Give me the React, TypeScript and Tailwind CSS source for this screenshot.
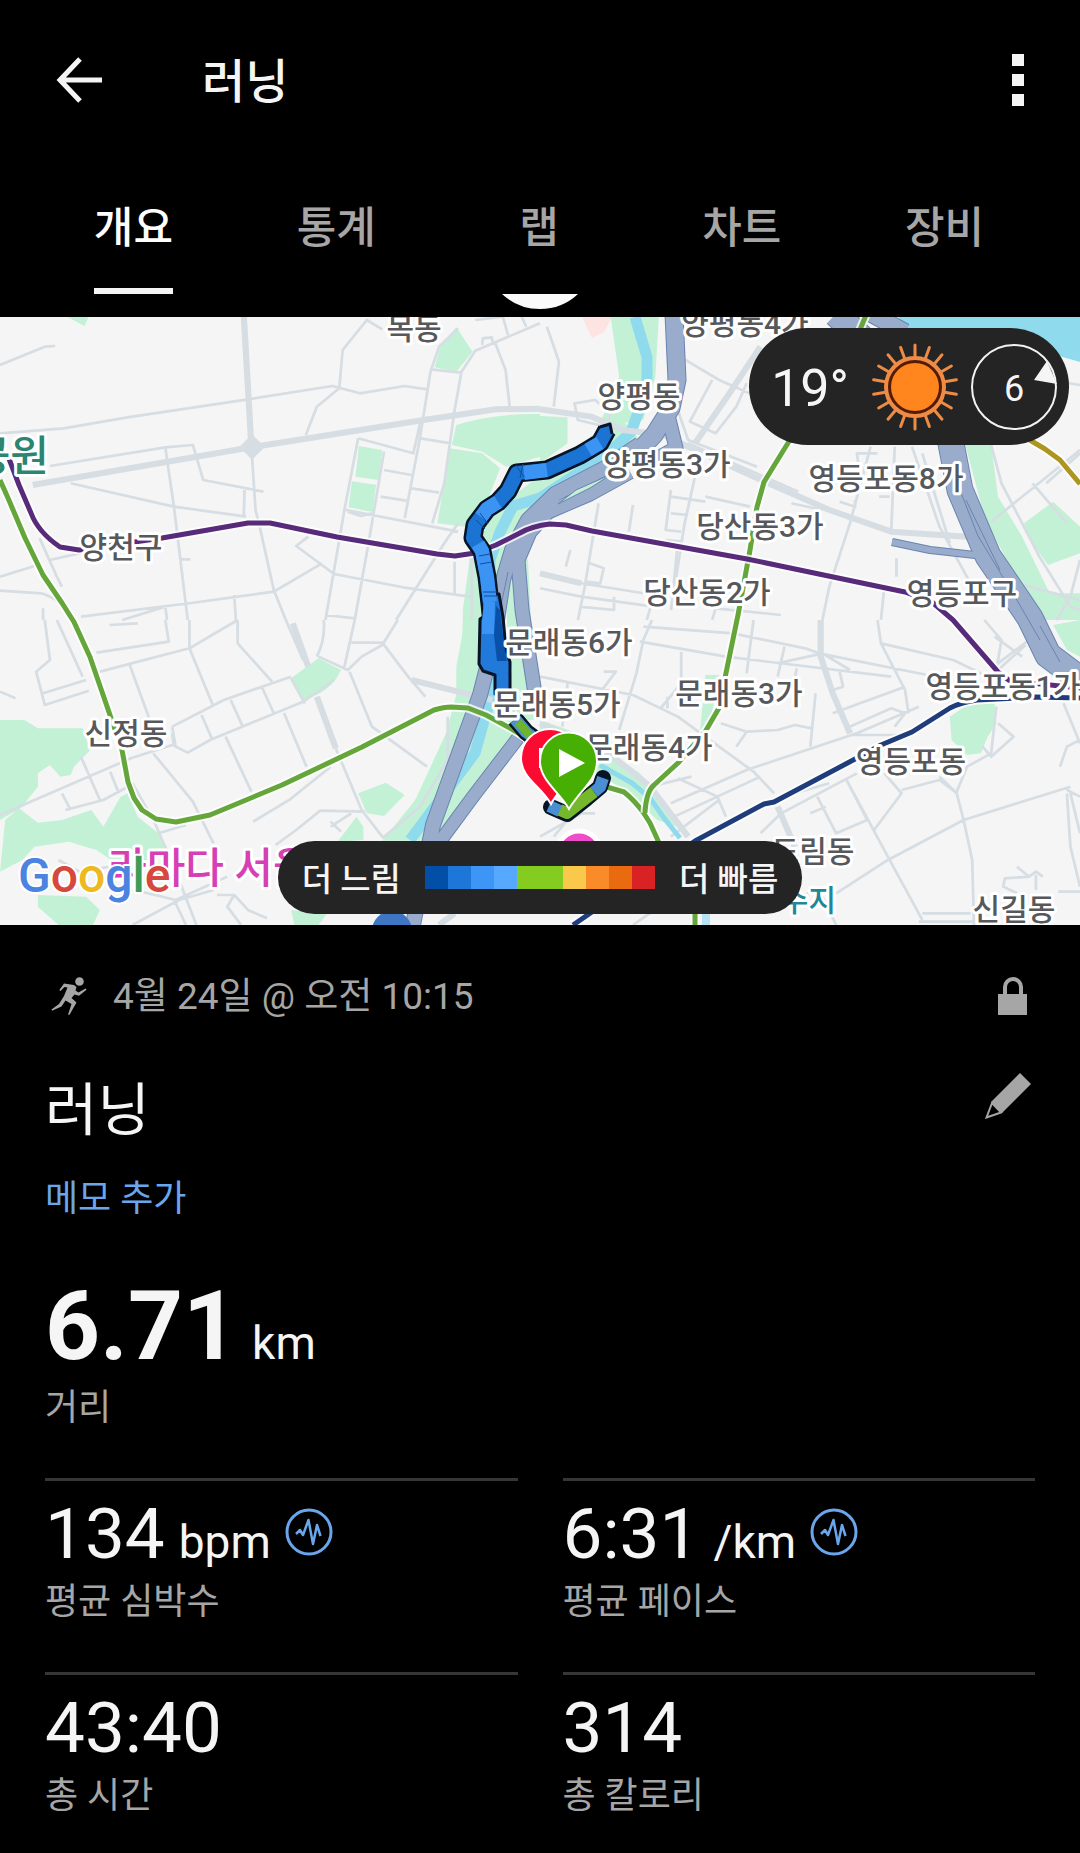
import { useState } from "react"
import clsx from "clsx"

const tabs = ["개요", "통계", "랩", "차트", "장비"]

const paceColors = [
  "bg-[#034fa8]",
  "bg-[#1c77d8]",
  "bg-[#3d96f5]",
  "bg-[#57a9ff]",
  "bg-[#84cc1f]",
  "bg-[#84cc1f]",
  "bg-[#fac94c]",
  "bg-[#f98c28]",
  "bg-[#ea6a10]",
  "bg-[#d82224]",
]

const stats = [
  { value: "134", unit: "bpm", label: "평균 심박수", graph: true },
  { value: "6:31", unit: "/km", label: "평균 페이스", graph: true },
  { value: "43:40", unit: "", label: "총 시간", graph: false },
  { value: "314", unit: "", label: "총 칼로리", graph: false },
]

const places = [
  { name: "목동", x: 414, y: 29 },
  { name: "양천구", x: 121, y: 248 },
  { name: "양평동", x: 639, y: 97 },
  { name: "양평동4가", x: 745, y: 24 },
  { name: "양평동3가", x: 667, y: 165 },
  { name: "영등포동8가", x: 886, y: 179 },
  { name: "당산동3가", x: 760, y: 227 },
  { name: "당산동2가", x: 707, y: 293 },
  { name: "영등포구", x: 962, y: 294 },
  { name: "문래동6가", x: 569, y: 343 },
  { name: "문래동5가", x: 557, y: 405 },
  { name: "문래동3가", x: 739, y: 394 },
  { name: "문래동4가", x: 649, y: 448 },
  { name: "영등포동1가", x: 1003, y: 387 },
  { name: "영등포동", x: 911, y: 462 },
  { name: "신정동", x: 126, y: 434 },
  { name: "도림동", x: 813, y: 552 },
  { name: "신길동", x: 1014, y: 610 },
]

// Each tile covers 540x310 of the map and is drawn on a 1568x930 grid
const tiles = [
  {
    id: "nw",
    transform: "translate(0 0) scale(0.3444 0.3333)",
    parks:
      "M195 20H258L245 48ZM1325 52L1372 125L1325 185L1262 172L1280 105ZM1042 408L1110 420L1100 510L1032 500ZM1022 514L1092 524L1082 606L1012 592ZM1325 345Q1430 310 1568 312V440L1470 470L1400 425L1312 405ZM1306 415L1400 430L1452 475L1420 560L1350 650L1270 640Z",
    highways: "M95 525L730 412L1230 330L1440 298L1568 296M708 20L730 412",
    roads:
      "M0 165L130 110L160 108M0 370L185 355L370 322L720 268L965 228L1045 250L1175 228L1240 238M730 412L742 600L755 655L795 840L830 930M145 468L480 412L560 405L590 510L765 545M480 412L505 590L545 930M205 520L505 590L715 620M710 535L708 615M985 235L995 120L1065 30L1110 58M985 235L920 290L888 375M1568 40L1380 122L1340 185L1320 300L1290 520L1255 640M1330 55L1275 110L1250 185L1220 380L1175 625M1250 178L1340 188M1438 100L1468 180L1480 290M1400 105L1402 85L1428 82L1432 105M1380 30L1460 20L1475 75M1515 20L1528 50M1040 385L1200 430L1222 330M1040 385L1000 600L945 930M1115 425L1070 700L1030 930M1115 480L1195 495M1105 560L1180 572M1195 535L1275 548M1220 385L1310 400M1005 600L1330 665M1010 605L1048 618L1080 610M1330 640L1290 700L1150 930M895 680L860 708L970 792L1170 832L1365 860M935 760L795 845L550 880L235 920M1320 755V850M1370 740V930M525 748H553M115 685L165 800L180 830M0 800L100 768M145 750L240 728M0 842L120 850Q180 870 205 920M125 895V930M480 890L485 930M680 855L685 930M355 930L480 890M945 915L1030 925",
  },
  {
    id: "ne",
    transform: "translate(540 0) scale(0.3444 0.3333)",
    parks:
      "M205 20H345L335 200L300 330L170 350L230 200ZM0 318L80 322V400L0 460ZM1235 405H1310L1330 560L1400 680L1480 850L1568 850V930H1440L1380 800L1290 620ZM1405 640L1490 575L1568 650V730L1475 765L1430 700Z",
    highways:
      "M0 298L150 320L240 360L360 375L430 410L620 500L840 600L1020 665L1240 680M640 110L550 250L450 400M0 790L120 820",
    roads:
      "M20 50L55 155L40 290M415 145L520 210L630 260M500 210L435 335L510 370L570 290L600 220M100 280L160 270L205 310L190 350L110 330ZM390 270L430 390L630 470M430 400L750 545M380 540L365 660L410 665M380 560L480 575M380 610L430 615M480 560L610 590M365 690L415 695M450 500L420 640L380 900M270 585L258 665M88 720L75 770M170 580L130 830L110 930M400 700L385 860M145 760L185 775L175 820L135 815M120 820L300 850M0 835L120 860L330 890M115 890L215 900V860M330 860L310 930M510 895L500 930M510 895L700 915M960 410L900 640L840 830L820 930M1030 410L1020 660M1080 410L1160 650L1250 820M1110 430L1190 700M980 430H920L930 500M870 575L915 590V570M985 560H1015M1035 745V800M1000 830L990 930M1568 420L1310 635M1430 520L1530 640M1470 520L1568 430M1310 405L1340 520L1450 740L1540 890L1568 900M1380 820L1568 870M1500 930L1540 860L1568 750M1480 210L1568 225M820 600L730 580",
  },
  {
    id: "sw",
    transform: "translate(0 310) scale(0.3444 0.3333)",
    parks:
      "M0 300H70L110 325H240L262 390L215 440L205 465L175 470L145 435L110 460V500L60 565L0 600ZM15 600L55 565L110 608L180 600L265 570L300 620L350 530L370 520L400 590L460 640L490 690L380 760L280 690L200 665L100 680L65 720L0 755ZM110 825L250 830L290 870L270 915H170L110 860ZM845 175L925 115L990 150Q960 220 880 238ZM1040 520L1120 488L1175 525L1115 588L1065 580ZM1035 590L1055 620L1055 660L980 665ZM845 870L950 880L925 915H855ZM1390 0H1350L1325 140V250L1310 400L1190 560L1110 662H1250L1400 520L1500 350L1490 160L1400 150Z",
    highways: "M850 10L895 140M920 230L975 385M1195 180L1330 215L1430 240M1275 915L1320 880",
    roads:
      "M130 0L145 120L105 155L130 255L258 212M125 220L250 180M165 0L240 170M290 155L550 85L690 0M550 0V85L620 260M280 98L490 65L480 0M318 15L400 10M375 130L435 300M690 0V70L790 185M830 0L880 120M940 0Q945 60 920 110M925 110L1010 150L1050 110L1110 75L1155 0M1030 0L1000 140M1020 68H1110L1185 170L1235 230M1015 155L1080 320L1240 440M650 240L845 170M500 320L650 240L760 200L795 280M500 320L510 380L545 398L610 360L880 245L970 180M585 285L615 355M670 240L705 320M845 175L885 250M825 280L890 440M655 350L730 515M500 375L380 415L0 585M500 340L505 380M445 400L560 545L620 670M235 410L290 540M320 455L345 520M180 520L205 570M190 570L300 540L390 490M385 490L450 610L520 780L570 915M460 640L540 615M975 385L1050 570L1110 650M1060 575L930 572L860 630L800 675M960 605L990 635M1020 580L960 620M960 440L840 540L735 605M0 215L45 235M1300 290V420L1220 560L1110 655M390 810L510 840L660 770M385 915L520 840L620 810M510 850L540 915M630 825H680L720 870L775 895M680 825L660 860L700 915M170 720L230 755L350 735",
  },
  {
    id: "se",
    transform: "translate(540 310) scale(0.3444 0.3333)",
    parks:
      "M480 165H520L495 300L465 330ZM1190 290L1240 255L1320 250L1325 310L1300 350L1280 400L1240 405L1195 360ZM0 300Q120 340 180 380L290 460L350 540L400 620L340 600L260 520L120 430L0 340ZM1490 15L1568 0V110L1530 90Z",
    highways:
      "M815 0V110L850 220L900 340M0 310L200 400L320 500L430 650M690 560L740 680",
    roads:
      "M300 20L560 40L770 85L810 100L1125 165M290 65L540 110L1020 170M690 130L820 100L900 150M280 160L300 60L325 0M280 160L230 330M0 170L270 225L400 290L620 455L680 520M410 95V190L350 265M370 230V265M690 170L710 80M800 220L785 380M745 145L735 210M980 0L990 70L1060 210L1070 280M990 70L1200 120L1300 170M870 155L880 200L850 210M525 310L600 335L690 330L740 315L790 325M600 335L570 380M380 550L600 450L920 340L1100 260M390 590L640 470M850 280L1060 200M900 320L1020 265L1060 280L1030 320M900 345H1060M400 475L515 530L540 590M320 500L440 470M380 650L520 540M740 520L840 490M640 640L700 580L920 460M805 530L860 640L950 600L890 480M785 580L830 560M890 480L1010 710L1110 900M1000 460L1050 520L970 630M1050 510L1160 480L1210 520M1160 470L1210 520L1230 600L1255 720L1260 915M1210 515L1240 440L1310 400L1325 260M1330 310L1375 350L1310 410L1285 380M1520 250L1568 370M1510 440L1530 380L1568 360M1540 500L1230 600L1010 720L860 820M1530 510L1568 530M1530 520L1540 680L1568 800M1540 520L1568 640M1385 740L1420 770L1440 755L1460 770M1440 765V810M1420 770L1350 775L1345 800L1385 820M1110 880H1250M1100 905H1260M1505 815H1568M820 830L860 915M0 650L120 580L160 580M40 650L80 600M180 210L220 155H185M80 190L65 320M270 915L360 850M650 880L780 820M1320 50L1400 110M1290 0L1340 60L1320 180M1420 60L1330 130M1410 75L1330 150M600 160L620 0",
  },
]

const font = "Roboto, 'Noto Sans CJK KR', sans-serif"

function RouteMap() {
  return (
    <svg
      viewBox="0 7 1080 608"
      className="block w-full bg-[#f5f5f5]"
      role="img"
      aria-label="러닝 경로 지도"
      fill="none"
      fontFamily={font}
    >
      {/* Han river and hospital block */}
      <path d="M898 7H1080V52L1052 44L960 24L910 22Z" fill="#90daee" />
      <path d="M582 7H612L604 22L592 28Z" fill="#fde3e1" />

      {tiles.map((tile) => (
        <path key={tile.id} d={tile.parks} transform={tile.transform} fill="#c3f1d5" />
      ))}

      {/* Stream with its green banks */}
      <path d="M631 120L600 146L540 192L506 216L492 240L484 300L482 370L466 430L420 530" stroke="#c3f1d5" strokeWidth="42" strokeLinejoin="round" />
      <path d="M516 250L520 330L530 410" stroke="#c3f1d5" strokeWidth="24" />
      <path d="M635 7L647 47L647 78L631 122L610 142L540 188L513 196L500 222L490 250L489 393L475 443L410 530" stroke="#90daee" strokeWidth="11" strokeLinejoin="round" />

      {tiles.map((tile) => (
        <g key={tile.id} transform={tile.transform} stroke="#d6dde3" strokeLinejoin="round">
          <path d={tile.roads} strokeWidth="8" />
          <path d={tile.highways} strokeWidth="18" />
        </g>
      ))}
      <path d="M252 127L262 137L252 147L242 137Z" fill="#d6dde3" stroke="#d6dde3" strokeWidth="4" />
      <path d="M600 455L632 473L650 488L664 508L680 528" stroke="#90daee" strokeWidth="5" />
      <path d="M706 603V615" stroke="#b6e2f1" strokeWidth="8" />

      {/* Expressways */}
      {[
        { color: "#6984af", extra: 2 },
        { color: "#9aaccc", extra: 0 },
      ].map((pass) => (
        <g key={pass.color} stroke={pass.color} strokeLinejoin="round">
          <path d="M674 4L677 70L671 98L654 125L628 152" strokeWidth={17 + pass.extra} />
          <path d="M668 105L676 138L640 158" strokeWidth={13 + pass.extra} />
          <path d="M640 134L605 158L555 184L528 210L512 240L503 270L494 330L480 385L433 515L412 620" strokeWidth={14 + pass.extra} />
          <path d="M630 162L590 184L548 202L530 222L518 250L522 300L536 390" strokeWidth={13 + pass.extra} />
          <path d="M518 428L472 488L430 545" strokeWidth={12 + pass.extra} />
          <path d="M836 4L868 34L920 60L948 118L960 180L988 246L1030 308L1048 345L1084 372" strokeWidth={25 + pass.extra} />
          <path d="M892 232L930 240L984 246" strokeWidth={6 + pass.extra} />
          <path d="M868 2L905 22" strokeWidth={16 + pass.extra} />
        </g>
      ))}
      {/* Gap between the carriageways at Yangpyeong */}
      <path d="M558 194L576 180L612 164L590 178Z" fill="#c3f1d5" stroke="#6984af" />
      <path d="M952 160L978 226L1018 292L1040 330M966 190L1000 260M500 300L508 262M1040 316L1060 352" stroke="#6984af" strokeWidth="1" />

      {/* Subway lines */}
      {[
        { id: "green-west", color: "#64a63a", d: "M0 170L8 188L25 228L43 265L62 293L74 312L90 347L110 405L122 440L128 472L134 488L142 500L156 509L176 512L210 505L282 475L362 437L434 400Q444 397 451 397L468 398L486 405L510 418L540 436M600 475L624 482Q634 490 643 502L650 513L660 535M695 600V615" },
        { id: "green-east", color: "#64a63a", d: "M866 5L857 27L788 133L764 172L757 197L750 240L738 305L726 363L719 398L705 422L678 453L654 475Q646 482 645 503" },
        { id: "purple", color: "#572b7a", d: "M8 146L19 175L31 203Q38 222 60 237L79 240L162 228L248 213H270L337 227L437 244L455 246L475 243L496 235L520 223Q532 216 550 214L566 215L592 221L747 249L905 282L932 292L953 310L998 362L1010 371L1080 378" },
        { id: "navy", color: "#1f3d7a", d: "M1080 388L1036 387L977 390Q962 392 950 398L912 422L881 435L857 448L774 492L764 494L695 531L573 615" },
        { id: "olive", color: "#ad951f", d: "M1028 129L1045 139L1060 150L1080 174" },
      ].map((line) => (
        <g key={line.id} strokeLinejoin="round">
          <path d={line.d} stroke="#ffffff" strokeOpacity="0.8" strokeWidth="9" />
          <path d={line.d} stroke={line.color} strokeWidth="5" />
        </g>
      ))}

      {/* Run track, tinted by pace */}
      <g strokeLinejoin="round">
        <path d="M607 120L600 133L580 145L547 160L517 163L508 181L498 192L487 199L475 215L473 228L482 241L487 267L491 303" stroke="#071426" strokeWidth="19" />
        <path d="M499 284L503 307L506 340L510 352V384H495V365L483 361L479 354L480 309L483 307L484 286Z" fill="#2179d9" stroke="#071426" strokeWidth="3" />
        <path d="M607 120L600 133L580 145L547 160L517 163L508 181L498 192L487 199L475 215L473 228L482 241L487 267L491 303" stroke="#1b74d4" strokeWidth="14" />
        <path d="M600 133L588 140M547 160L524 163M498 192L487 199L481 207M478 234L482 241L487 267L490 292" stroke="#3b93f3" strokeWidth="14" />
        <path d="M484 292H495L494 324H482V310Z" fill="#3b93f3" />
        <path d="M496 296L500 300L505 342L507 351H497L494 325Z" fill="#0951a8" />
        <path d="M516 155L524 167M523 154L520 168M480 203L488 214M476 210L485 219M479 246L490 244M480 254L492 252M483 282H497M484 286H497" stroke="#0d4f9f" strokeWidth="1" />
        {/* Pointed end of the track */}
        <path d="M600 117L610 114L612 124" fill="#1b74d4" stroke="#071426" strokeWidth="3" />
        <path d="M515 409L526 422L542 434" stroke="#071426" strokeWidth="17" />
        <path d="M603 468L600 477L587 488L567 504L551 497" stroke="#071426" strokeWidth="16" strokeLinecap="round" />
        <path d="M515 409L526 422L542 434" stroke="#4e92cc" strokeWidth="12" />
        <path d="M518 412L530 426" stroke="#6fb52a" strokeWidth="8" />
        <path d="M603 468L600 477L594 482M560 501L549 496" stroke="#4b8fd3" strokeWidth="12" />
        <path d="M594 482L567 503L560 500" stroke="#76b82d" strokeWidth="12" />
      </g>

      {/* Points of interest under the legend */}
      <circle cx="579" cy="543" r="22" fill="#ee4cc8" stroke="#ffffff" strokeWidth="5" />
      <circle cx="392" cy="621" r="20" fill="#3f76c4" />

      {places.map((place) => (
        <text
          key={place.name}
          x={place.x}
          y={place.y}
          textAnchor="middle"
          fontSize="30"
          fontWeight="500"
          fill="#56585c"
          stroke="#ffffff"
          strokeWidth="6"
          strokeLinejoin="round"
          paintOrder="stroke"
        >
          {place.name}
        </text>
      ))}
      <g stroke="#ffffff" strokeWidth="6" strokeLinejoin="round" paintOrder="stroke" fontWeight="500">
        <text x="49" y="161" textAnchor="end" fontSize="42" fill="#2b8570">공원</text>
        <text x="108" y="573" fontSize="42" fill="#d63fb5">라마다 서울</text>
        <text x="836" y="601" textAnchor="end" fontSize="30" fill="#1f8797">수지</text>
        <text x="18" y="582" fontSize="48" strokeWidth="4">
          <tspan fill="#4a83e0">G</tspan>
          <tspan fill="#d6483d">o</tspan>
          <tspan fill="#ecb91f">o</tspan>
          <tspan fill="#4a83e0">g</tspan>
          <tspan fill="#3c9c58">l</tspan>
          <tspan fill="#d6483d">e</tspan>
        </text>
      </g>

      {/* Finish and start pins */}
      <path d="M551 494C541 476 521 468 521 448A29 29 0 0 1 579 448C579 468 560 476 551 494Z" fill="#fb0a32" stroke="#ffffff" strokeWidth="2" />
      <rect x="539" y="438" width="20" height="20" fill="#ffffff" />
      <path d="M569 499C559 481 540 471 540 451A28 28 0 0 1 597 451C597 471 579 481 569 499Z" fill="#47ae04" stroke="#ffffff" strokeWidth="2" />
      <path d="M559 439L585 453L559 467Z" fill="#ffffff" />
    </svg>
  )
}

function SunIcon() {
  const rays = Array.from({ length: 18 }, (_, i) => i * 20)
  return (
    <svg viewBox="-44 -44 88 88" className="size-[88px]" aria-hidden="true">
      {rays.map((angle) => (
        <line key={angle} y1="-30" y2="-42" stroke="#ee8b44" strokeWidth="3" strokeLinecap="round" transform={`rotate(${angle})`} />
      ))}
      <circle r="29" fill="#551c05" stroke="#ee8b44" strokeWidth="4" />
      <circle r="24" fill="#ff861f" />
    </svg>
  )
}

function WindIcon() {
  return (
    <svg viewBox="-44 -44 88 88" className="size-[88px]" aria-label="풍속 6" fontFamily={font}>
      <circle r="42" fill="none" stroke="#f3f3f3" strokeWidth="2" />
      <path d="M20 -7L33 -26L43 -3Z" fill="#f5f5f5" />
      <text y="14" textAnchor="middle" fontSize="36" fill="#f5f5f5">6</text>
    </svg>
  )
}

function RunnerIcon() {
  return (
    <svg viewBox="0 0 36 40" className="h-10 w-9" fill="#a6a6a6" aria-hidden="true">
      <circle cx="28.500" cy="5.500" r="4.300" />
      <path d="M13 7.500L23 9L25.500 11L24.500 14.500L27.500 16.500L34.500 12.500L35.500 13.700L28 19.700L23.500 18.500L20.500 22L25.500 26.500L18.500 38.800H17L20.500 28L14.500 24.500L10.500 30.500L1 34.800L0.500 33.500L8 28L13 20L16.500 11.500L13.500 11L9.500 15L8.300 14Z" />
    </svg>
  )
}

function LockIcon() {
  return (
    <svg viewBox="0 0 30 38" className="h-[38px] w-[30px]" aria-label="비공개">
      <path d="M7 18V10A8 8 0 0 1 23 10V18" fill="none" stroke="#a6a6a6" strokeWidth="4" />
      <path d="M0 17H29V38H0Z" fill="#a6a6a6" />
    </svg>
  )
}

function PencilIcon() {
  return (
    <svg viewBox="0 0 46 46" className="size-[46px]" aria-hidden="true">
      <path d="M35 0L46 11L17 40L6 29Z" fill="#a6a6a6" />
      <path d="M7 30L1.500 44.500L16 39.500Z" fill="none" stroke="#a6a6a6" strokeWidth="2" />
    </svg>
  )
}

function GraphIcon() {
  return (
    <svg viewBox="0 0 48 48" className="size-12" fill="none" stroke="#69a6ec" aria-hidden="true">
      <circle cx="24" cy="24" r="22" strokeWidth="3" />
      <path d="M11 26L15 22L18 27L23.500 12L28 36L32 17L35.500 28" strokeWidth="2.500" strokeLinejoin="round" />
    </svg>
  )
}

export default function App() {
  const [activeTab, setActiveTab] = useState("개요")

  return (
    <div className="min-h-screen bg-black pb-6 font-[Roboto,'Noto_Sans_CJK_KR',sans-serif] text-[#f5f5f5]">
      {/* Top bar */}
      <header className="flex h-40 items-center justify-between pr-10 pl-14">
        <div className="flex items-center gap-[98px]">
          <button type="button" aria-label="뒤로">
            <svg viewBox="0 0 48 48" className="size-12" fill="none" stroke="#f5f5f5" strokeWidth="5">
              <path d="M46 24H5M24 3L4 24L24 45" />
            </svg>
          </button>
          <h1 className="pt-1 text-[47px] leading-[60px] font-medium">러닝</h1>
        </div>
        <button type="button" aria-label="더보기" className="flex w-11 flex-col items-center gap-2">
          <span className="size-3 bg-[#f5f5f5]" />
          <span className="size-3 bg-[#f5f5f5]" />
          <span className="size-3 bg-[#f5f5f5]" />
        </button>
      </header>

      {/* Tabs */}
      <nav className="grid grid-cols-5 pr-[34px] pl-8" role="tablist">
        {tabs.map((tab) => (
          <button
            key={tab}
            type="button"
            role="tab"
            aria-selected={activeTab === tab}
            onClick={() => setActiveTab(tab)}
            className="flex justify-center text-[43px] font-medium"
          >
            <span
              className={clsx(
                "flex h-[134px] items-center border-b-6 pt-2",
                activeTab === tab ? "border-[#f5f5f5] text-white" : "border-transparent text-[#a6a6a6]"
              )}
            >
              {tab}
            </span>
          </button>
        ))}
      </nav>

      {/* Refresh knob peeking out from under the tabs */}
      <div className="flex h-[23px] justify-center">
        <svg viewBox="0 0 76 16" className="h-4 w-[76px]" aria-hidden="true">
          <path d="M0 0H76Q60 15 38 15Q16 15 0 0Z" fill="#fafafa" />
        </svg>
      </div>

      {/* Map */}
      <section className="relative">
        <RouteMap />
        <div className="absolute top-[11px] right-[11px] flex h-[117px] items-center rounded-full bg-[#242424] pr-[11px] pl-[22px]">
          <span className="pt-1 text-[52px] leading-none">19°</span>
          <span className="ml-[22px]">
            <SunIcon />
          </span>
          <span className="ml-[11px]">
            <WindIcon />
          </span>
        </div>
        <div className="absolute inset-x-0 bottom-[11px] flex justify-center">
          <div className="flex h-[73px] items-center gap-6 rounded-full bg-[#242424] px-6 text-[33px] font-medium whitespace-nowrap">
            <span className="pt-1">더 느림</span>
            <span className="flex">
              {paceColors.map((color, index) => (
                <span key={index} className={clsx("h-[23px] w-[23px]", color)} />
              ))}
            </span>
            <span className="pt-1">더 빠름</span>
          </div>
        </div>
      </section>

      {/* Activity details */}
      <main className="px-[45px] pt-[46px]">
        <div className="flex items-center justify-between pr-[7px] pl-1.5 text-[#a6a6a6]">
          <div className="flex items-center gap-[26px]">
            <RunnerIcon />
            <time className="pt-0.5 text-[37px] leading-[48px]">4월 24일 @ 오전 10:15</time>
          </div>
          <LockIcon />
        </div>

        <div className="mt-[52px] flex items-start justify-between pr-1">
          <h2 className="pt-0.5 text-[57px] leading-[72px]">러닝</h2>
          <button type="button" aria-label="편집">
            <PencilIcon />
          </button>
        </div>

        <button type="button" className="mt-[28px] block text-[36px] leading-[48px] text-[#69a6ec]">
          메모 추가
        </button>

        <dl>
          <div className="mt-[55px] flex flex-col-reverse">
            <dt className="mt-2.5 text-[36px] leading-[48px] text-[#a6a6a6]">거리</dt>
            <dd className="flex items-baseline">
              <span className="text-[96px] leading-[96px] font-bold">6.71</span>
              <span className="ml-3.5 text-[46px] leading-none">km</span>
            </dd>
          </div>

          <div className="mt-[46px] grid grid-cols-2 gap-x-[45px] gap-y-[46px]">
            {stats.map((stat) => (
              <div key={stat.label} className="flex flex-col-reverse border-t-3 border-[#363636] pt-[17px]">
                <dt className="mt-2 text-[36px] leading-[48px] text-[#a6a6a6]">{stat.label}</dt>
                <dd className="flex items-center">
                  <span className="flex items-baseline">
                    <span className="text-[71px] leading-[72px]">{stat.value}</span>
                    {stat.unit && <span className="ml-3.5 text-[46px] leading-none">{stat.unit}</span>}
                  </span>
                  {stat.graph && (
                    <span className="ml-3.5 pb-1">
                      <GraphIcon />
                    </span>
                  )}
                </dd>
              </div>
            ))}
          </div>
        </dl>
      </main>
    </div>
  )
}
